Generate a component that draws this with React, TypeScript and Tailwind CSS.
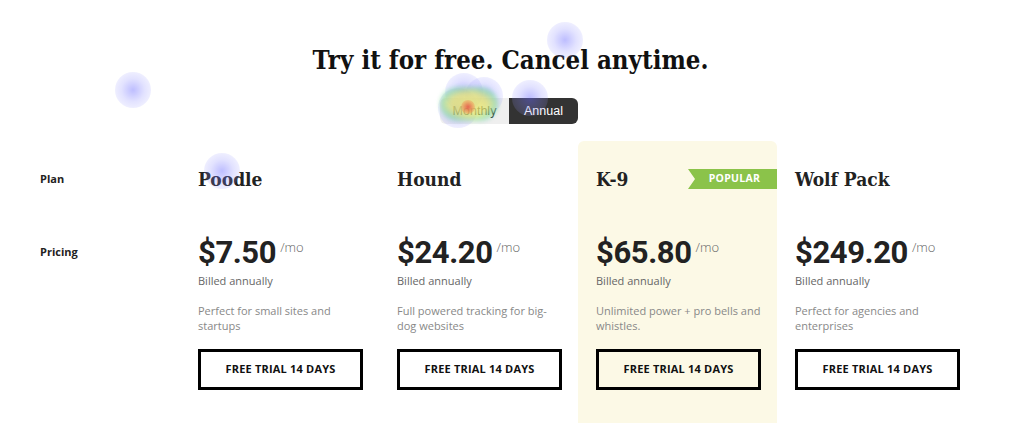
import React from 'react';

type Plan = {
  name: string;
  price: string;
  desc: string[];
  popular?: boolean;
};

const plans: Plan[] = [
  { name: 'Poodle', price: '$7.50', desc: ['Perfect for small sites and', 'startups'] },
  { name: 'Hound', price: '$24.20', desc: ['Full powered tracking for big-', 'dog websites'] },
  { name: 'K-9', price: '$65.80', desc: ['Unlimited power + pro bells and', 'whistles.'], popular: true },
  { name: 'Wolf Pack', price: '$249.20', desc: ['Perfect for agencies and', 'enterprises'] },
];

const slab = "font-['DejaVu_Serif',serif] font-stretch-condensed";
const body = "font-['Open_Sans',sans-serif]";

function Dot({ className }: { className: string }) {
  return (
    <div
      className={`pointer-events-none absolute rounded-full bg-[radial-gradient(circle,rgba(110,110,255,0.45)_0%,rgba(140,140,255,0.25)_45%,rgba(160,160,255,0.15)_75%,rgba(160,160,255,0)_100%)] ${className}`}
    />
  );
}

function PlanColumn({ plan }: { plan: Plan }) {
  return (
    <div
      className={`relative flex flex-col pl-[18px] pt-[26px] pb-[40px] rounded-t-[6px] ${
        plan.popular ? 'bg-[#fcf9e6]' : ''
      }`}
    >
      <div className="flex h-[24px] items-center">
        <h3 className={`${slab} text-[19px] font-bold leading-[24px] text-[#222]`}>{plan.name}</h3>
      </div>
      {plan.popular && (
        <div className="absolute right-0 top-[28px] flex h-[20px] w-[89px] items-center justify-center bg-[#8bc34a] [clip-path:polygon(0_0,100%_0,100%_100%,0_100%,7px_50%)]">
          <span className={`${body} pl-[4px] text-[10.5px] font-bold tracking-[0.3px] text-white`}>POPULAR</span>
        </div>
      )}

      <div className="mt-[44px] flex items-start">
        <span className="font-['Roboto',sans-serif] text-[31px] font-bold leading-[36px] tracking-[-0.4px] text-[#222]">
          {plan.price}
        </span>
        <span className={`${body} ml-[4px] mt-[3px] text-[13px] font-light text-[#666]`}>/mo</span>
      </div>
      <p className={`${body} mt-[2px] text-[11px] leading-[15px] text-[#666]`}>Billed annually</p>

      <p className={`${body} mt-[15px] text-[11px] leading-[15px] text-[#888]`}>
        {plan.desc[0]}
        <br />
        {plan.desc[1]}
      </p>

      <button
        className={`${body} mt-[16px] flex h-[41px] w-[165px] items-center justify-center border-[3px] border-black text-[11px] font-bold tracking-[0.2px] text-[#111]`}
      >
        FREE TRIAL 14 DAYS
      </button>
    </div>
  );
}

export default function App() {
  return (
    <div className="relative h-[423px] w-[1024px] overflow-hidden bg-white">
      <h1 className={`${slab} -ml-[3px] pt-[40px] text-center text-[25.6px] font-bold leading-[40px] text-[#111]`}>
        Try it for free. Cancel anytime.
      </h1>

      <div className="mt-[18px] flex justify-center">
        <div className="-ml-[6px] flex h-[26px] font-['Liberation_Sans',sans-serif] text-[12.5px]">
          <button className="w-[69px] rounded-l-[6px] bg-[#efefef] text-[#333]">Monthly</button>
          <button className="w-[69px] rounded-r-[6px] bg-[#333] text-white">Annual</button>
        </div>
      </div>

      <div className="mt-[17px] grid grid-cols-[180px_199px_199px_199px_199px]">
        <div className={`${body} flex flex-col pl-[40px] pt-[26px] text-[11px] font-bold text-[#222]`}>
          <div className="flex h-[24px] items-center">Plan</div>
          <div className="mt-[49px] flex h-[24px] items-center">Pricing</div>
        </div>
        {plans.map((p) => (
          <PlanColumn key={p.name} plan={p} />
        ))}
      </div>

      {/* heatmap overlay */}
      <Dot className="left-[115px] top-[72px] h-[36px] w-[36px]" />
      <Dot className="left-[547px] top-[22px] h-[36px] w-[36px]" />
      <Dot className="left-[204px] top-[153px] h-[36px] w-[36px]" />
      <Dot className="left-[512px] top-[80px] h-[36px] w-[36px]" />
      <Dot className="left-[445px] top-[73px] h-[38px] w-[38px]" />
      <Dot className="left-[465px] top-[77px] h-[38px] w-[38px]" />
      <Dot className="left-[438px] top-[88px] h-[40px] w-[40px]" />
      <div className="pointer-events-none absolute left-[440px] top-[87px] h-[34px] w-[58px] rounded-full bg-[radial-gradient(ellipse,rgba(250,245,90,0.7)_0%,rgba(240,240,90,0.65)_45%,rgba(100,220,140,0.5)_70%,rgba(100,160,255,0.3)_88%,rgba(120,120,255,0)_100%)] blur-[2px]" />
      <div className="pointer-events-none absolute left-[461px] top-[100px] h-[14px] w-[14px] rounded-full bg-[radial-gradient(circle,rgba(230,60,60,0.75)_0%,rgba(240,140,80,0.45)_60%,rgba(250,200,90,0)_100%)]" />
    </div>
  );
}
